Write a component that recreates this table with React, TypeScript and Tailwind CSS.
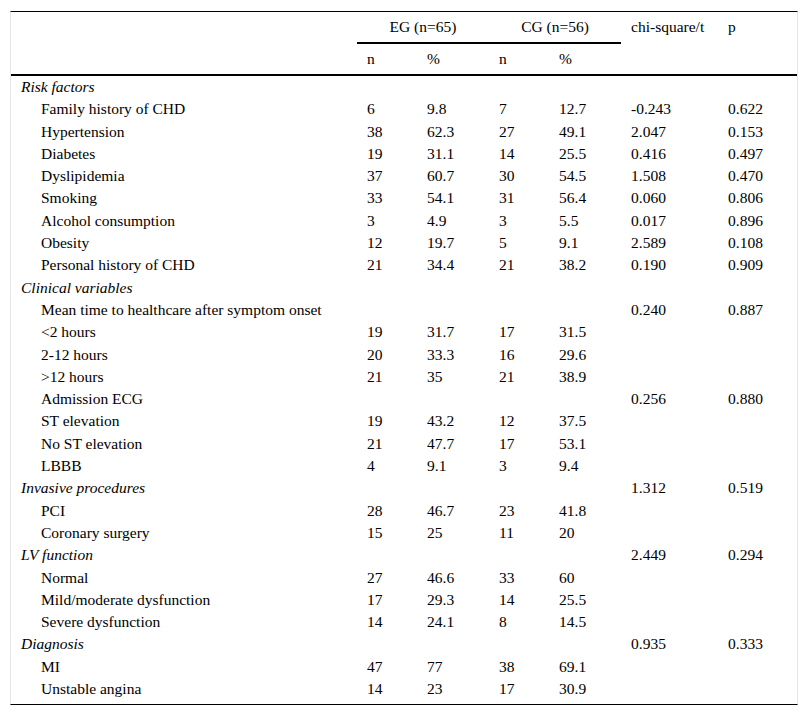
type Row = {
  label: string;
  section?: boolean;
  v?: [string, string, string, string, string, string];
};

const e = "";

const rows: Row[] = [
  { label: "Risk factors", section: true },
  { label: "Family history of CHD", v: ["6", "9.8", "7", "12.7", "-0.243", "0.622"] },
  { label: "Hypertension", v: ["38", "62.3", "27", "49.1", "2.047", "0.153"] },
  { label: "Diabetes", v: ["19", "31.1", "14", "25.5", "0.416", "0.497"] },
  { label: "Dyslipidemia", v: ["37", "60.7", "30", "54.5", "1.508", "0.470"] },
  { label: "Smoking", v: ["33", "54.1", "31", "56.4", "0.060", "0.806"] },
  { label: "Alcohol consumption", v: ["3", "4.9", "3", "5.5", "0.017", "0.896"] },
  { label: "Obesity", v: ["12", "19.7", "5", "9.1", "2.589", "0.108"] },
  { label: "Personal history of CHD", v: ["21", "34.4", "21", "38.2", "0.190", "0.909"] },
  { label: "Clinical variables", section: true },
  { label: "Mean time to healthcare after symptom onset", v: [e, e, e, e, "0.240", "0.887"] },
  { label: "<2 hours", v: ["19", "31.7", "17", "31.5", e, e] },
  { label: "2-12 hours", v: ["20", "33.3", "16", "29.6", e, e] },
  { label: ">12 hours", v: ["21", "35", "21", "38.9", e, e] },
  { label: "Admission ECG", v: [e, e, e, e, "0.256", "0.880"] },
  { label: "ST elevation", v: ["19", "43.2", "12", "37.5", e, e] },
  { label: "No ST elevation", v: ["21", "47.7", "17", "53.1", e, e] },
  { label: "LBBB", v: ["4", "9.1", "3", "9.4", e, e] },
  { label: "Invasive procedures", section: true, v: [e, e, e, e, "1.312", "0.519"] },
  { label: "PCI", v: ["28", "46.7", "23", "41.8", e, e] },
  { label: "Coronary surgery", v: ["15", "25", "11", "20", e, e] },
  { label: "LV function", section: true, v: [e, e, e, e, "2.449", "0.294"] },
  { label: "Normal", v: ["27", "46.6", "33", "60", e, e] },
  { label: "Mild/moderate dysfunction", v: ["17", "29.3", "14", "25.5", e, e] },
  { label: "Severe dysfunction", v: ["14", "24.1", "8", "14.5", e, e] },
  { label: "Diagnosis", section: true, v: [e, e, e, e, "0.935", "0.333"] },
  { label: "MI", v: ["47", "77", "38", "69.1", e, e] },
  { label: "Unstable angina", v: ["14", "23", "17", "30.9", e, e] },
];

export default function App() {
  return (
    <div className="min-h-screen bg-white pt-[11px] pl-[10px] text-[15.5px] text-black font-[family-name:'Liberation_Serif','Times_New_Roman',serif]">
      <div className="w-[788px] border-x border-x-[#e6e6e6] border-t border-t-black border-b border-b-black pb-[4px]">
        <table className="w-full table-fixed border-separate border-spacing-0">
          <colgroup>
            <col className="w-[346px]" />
            <col className="w-[60px]" />
            <col className="w-[72px]" />
            <col className="w-[60px]" />
            <col className="w-[72px]" />
            <col className="w-[97px]" />
            <col className="w-[79px]" />
          </colgroup>
          <thead>
            <tr>
              <th rowSpan={2} className="border-b-2 border-black p-0" />
              <th colSpan={2} className="border-b-2 border-black p-0 text-center font-normal leading-[30px]">
                EG (n=65)
              </th>
              <th colSpan={2} className="border-b-2 border-black p-0 text-center font-normal leading-[30px]">
                CG (n=56)
              </th>
              <th rowSpan={2} className="border-b-2 border-black p-0 pl-[10px] text-left align-top font-normal leading-[30px]">
                chi-square/t
              </th>
              <th rowSpan={2} className="border-b-2 border-black p-0 pl-[10px] text-left align-top font-normal leading-[30px]">
                p
              </th>
            </tr>
            <tr>
              {["n", "%", "n", "%"].map((h, i) => (
                <th key={i} className="border-b-2 border-black p-0 pl-[10px] text-left font-normal leading-[30px]">
                  {h}
                </th>
              ))}
            </tr>
          </thead>
          <tbody>
            {rows.map((r, i) => (
              <tr key={i}>
                <td
                  className={
                    r.section
                      ? "p-0 pl-[10px] italic leading-[22.3px] whitespace-nowrap"
                      : "p-0 pl-[30px] leading-[22.3px] whitespace-nowrap"
                  }
                >
                  {r.label}
                </td>
                {(r.v ?? [e, e, e, e, e, e]).map((c, j) => (
                  <td key={j} className="p-0 pl-[10px] leading-[22.3px]">
                    {c}
                  </td>
                ))}
              </tr>
            ))}
          </tbody>
        </table>
      </div>
    </div>
  );
}
